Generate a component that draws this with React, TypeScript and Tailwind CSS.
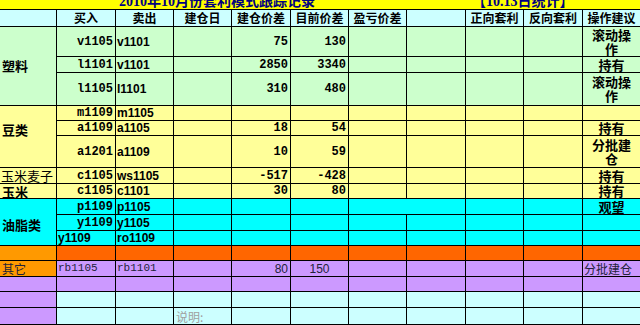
import React from "react";

type Kind =
  | "codeR"
  | "codeL"
  | "num"
  | "op"
  | "monoL"
  | "sansR"
  | "sansC"
  | "cjkL"
  | "note"
  | "none";

type C = { t?: React.ReactNode; k?: Kind };

const KIND: Record<Kind, string> = {
  codeR: "justify-end pr-[2px] font-['Liberation_Mono',monospace] font-bold text-[12px] text-black",
  codeL: "justify-start pl-[1px] font-['Liberation_Sans',Arial,sans-serif] font-bold text-[12px] text-black",
  num: "justify-end pr-[2px] font-['Liberation_Mono',monospace] font-bold text-[12px] text-black",
  op: "justify-center text-center font-['Noto_Sans_CJK_SC',sans-serif] font-bold text-[13px] text-black",
  monoL: "justify-start pl-[1px] font-['Liberation_Mono',monospace] text-[11px] text-[#22223a]",
  sansR: "justify-end pr-[2px] font-['Liberation_Sans',Arial,sans-serif] text-[12px] text-[#22223a]",
  sansC: "justify-center font-['Liberation_Sans',Arial,sans-serif] text-[12px] text-[#22223a]",
  cjkL: "justify-start pl-[1px] font-['Noto_Sans_CJK_SC',sans-serif] text-[12px] text-[#22223a]",
  note: "items-start justify-start pl-[2px] pt-[3px] font-['Noto_Sans_CJK_SC',sans-serif] text-[12px] text-[#a0a0a0]",
  none: "",
};

const e: C = {};
const cr = (t: string): C => ({ t, k: "codeR" });
const cl = (t: string): C => ({ t, k: "codeL" });
const n = (t: string): C => ({ t, k: "num" });
const op = (a: string, b?: string): C => ({
  t: b ? (
    <span className="block leading-[14px]">
      {a}
      <br />
      {b}
    </span>
  ) : (
    <span className="block leading-[14px]">{a}</span>
  ),
  k: "op",
});

type Row = { bg: string; cells: C[]; gNoR?: boolean };

const rows: Row[] = [
  { bg: "bg-[#ccffcc]", cells: [cr("v1105"), cl("v1101"), e, n("75"), n("130"), e, e, e, e, op("滚动操", "作")] },
  { bg: "bg-[#ccffcc]", cells: [cr("l1101"), cl("v1101"), e, n("2850"), n("3340"), e, e, e, e, op("持有")] },
  { bg: "bg-[#ccffcc]", cells: [cr("l1105"), cl("l1101"), e, n("310"), n("480"), e, e, e, e, op("滚动操", "作")] },
  { bg: "bg-[#ffff99]", cells: [cr("m1109"), cl("m1105"), e, e, e, e, e, e, e, e] },
  { bg: "bg-[#ffff99]", cells: [cr("a1109"), cl("a1105"), e, n("18"), n("54"), e, e, e, e, op("持有")] },
  { bg: "bg-[#ffff99]", cells: [cr("a1201"), cl("a1109"), e, n("10"), n("59"), e, e, e, e, op("分批建", "仓")] },
  { bg: "bg-[#ffff99]", cells: [cr("c1105"), cl("ws1105"), e, n("-517"), n("-428"), e, e, e, e, op("持有")] },
  { bg: "bg-[#ffff99]", cells: [cr("c1105"), cl("c1101"), e, n("30"), n("80"), e, e, e, e, op("持有")] },
  { bg: "bg-[#00ffff]", gNoR: true, cells: [cr("p1109"), cl("p1105"), e, e, e, e, e, e, e, op("观望")] },
  { bg: "bg-[#00ffff]", cells: [cr("y1109"), cl("y1105"), e, e, e, e, e, e, e, e] },
  { bg: "bg-[#00ffff]", cells: [cl("y1109"), cl("ro1109"), e, e, e, e, e, e, e, e] },
  { bg: "bg-[#ff6600]", cells: [e, e, e, e, e, e, e, e, e, e] },
  {
    bg: "bg-[#cc99ff]",
    cells: [
      { t: "rb1105", k: "monoL" },
      { t: "rb1101", k: "monoL" },
      e,
      { t: "80", k: "sansR" },
      { t: "150", k: "sansC" },
      e,
      e,
      e,
      e,
      { t: "分批建仓", k: "cjkL" },
    ],
  },
  { bg: "bg-[#cc99ff]", cells: [e, e, e, e, e, e, e, e, e, e] },
  { bg: "bg-[#ccffff]", cells: [e, e, e, e, e, e, e, e, e, e] },
  { bg: "bg-[#ccffff]", cells: [e, e, { t: "说明:", k: "note" }, e, e, e, e, e, e, e] },
];

const colA: Record<number, React.ReactNode> = {
  0: (
    <div className="row-span-3 flex items-center pl-[2px] pb-[1px] bg-[#ccffcc] border-r border-b border-black font-['Noto_Sans_CJK_SC',sans-serif] font-bold text-[13px] leading-none text-black">
      塑料
    </div>
  ),
  3: (
    <div className="row-span-3 flex items-start pl-[2px] pt-[17px] bg-[#ffff99] border-r border-b border-black font-['Noto_Sans_CJK_SC',sans-serif] font-bold text-[13px] leading-none text-black">
      豆类
    </div>
  ),
  6: (
    <div className="flex items-center pl-[1px] bg-[#ffff99] border-r border-b border-black font-['Noto_Sans_CJK_SC',sans-serif] text-[13px] leading-none text-black whitespace-nowrap">
      玉米麦子
    </div>
  ),
  7: (
    <div className="flex items-center pl-[2px] bg-[#ffff99] border-r border-b border-black font-['Noto_Sans_CJK_SC',sans-serif] font-bold text-[13px] leading-none text-black">
      玉米
    </div>
  ),
  8: (
    <div className="row-span-3 flex items-center pl-[2px] pt-[4px] bg-[#00ffff] border-r border-b border-black font-['Noto_Sans_CJK_SC',sans-serif] font-bold text-[13px] leading-none text-black">
      油脂类
    </div>
  ),
  11: <div className="bg-[#ff9900] border-r border-b border-black" />,
  12: (
    <div className="flex items-center pl-[2px] bg-[#ff9900] border-r border-b border-black font-['Noto_Sans_CJK_SC',sans-serif] text-[12px] leading-none text-[#22223a]">
      其它
    </div>
  ),
  13: <div className="bg-[#cc99ff] border-r border-b border-black" />,
  14: <div className="bg-[#cc99ff] border-r border-b border-black" />,
  15: <div className="bg-[#cc99ff] border-r border-b border-black" />,
};

const headers = ["买入", "卖出", "建仓日", "建仓价差", "目前价差", "盈亏价差", "", "正向套利", "反向套利", "操作建议"];

export default function App() {
  const out: React.ReactNode[] = [];
  rows.forEach((r, i) => {
    if (colA[i]) out.push(<React.Fragment key={`a${i}`}>{colA[i]}</React.Fragment>);
    r.cells.forEach((c, j) => {
      const last = j === 9;
      const noR = last || (r.gNoR && j === 5);
      out.push(
        <div
          key={`c${i}-${j}`}
          className={[
            "flex items-center whitespace-nowrap border-b border-black leading-none",
            noR ? "" : "border-r",
            r.bg,
            KIND[c.k ?? "none"],
          ].join(" ")}
        >
          {c.t}
        </div>
      );
    });
  });

  return (
    <div className="w-[640px] h-[325px] overflow-hidden bg-white">
      <div className="grid grid-cols-[57px_59px_58px_58px_59px_58px_58px_59px_58px_59px_57px] grid-rows-[10px_17px_30px_16px_33px_15px_15px_32px_16px_15px_16px_16px_15px_15px_16px_15px_16px_17px]">
        {/* title row */}
        <div className="col-span-2 bg-[#ffff00] border-b border-black" />
        <div className="col-span-6 flex items-end overflow-hidden pl-[3px] bg-[#ffff00] border-b border-black">
          <span className="whitespace-nowrap font-['Liberation_Serif','Noto_Sans_CJK_SC',serif] font-bold text-[14px] leading-[14px] text-[#000080]">
            2010年10月份套利模式跟踪记录
          </span>
        </div>
        <div className="col-span-3 flex items-end overflow-hidden pl-[6px] bg-[#ffff00] border-b border-black">
          <span className="whitespace-nowrap font-['Liberation_Serif','Noto_Sans_CJK_SC',serif] font-bold text-[14px] leading-[14px] text-[#000080]">
            【10.13日统计】
          </span>
        </div>
        {/* header row */}
        <div className="bg-[#ccffff] border-r border-b border-black" />
        {headers.map((h, j) => (
          <div
            key={`h${j}`}
            className={`flex items-center justify-center whitespace-nowrap bg-[#ccffff] border-b border-black font-['Noto_Sans_CJK_SC',sans-serif] font-bold text-[12px] leading-none text-black ${j === 9 ? "" : "border-r"}`}
          >
            {h}
          </div>
        ))}
        {out}
      </div>
    </div>
  );
}
